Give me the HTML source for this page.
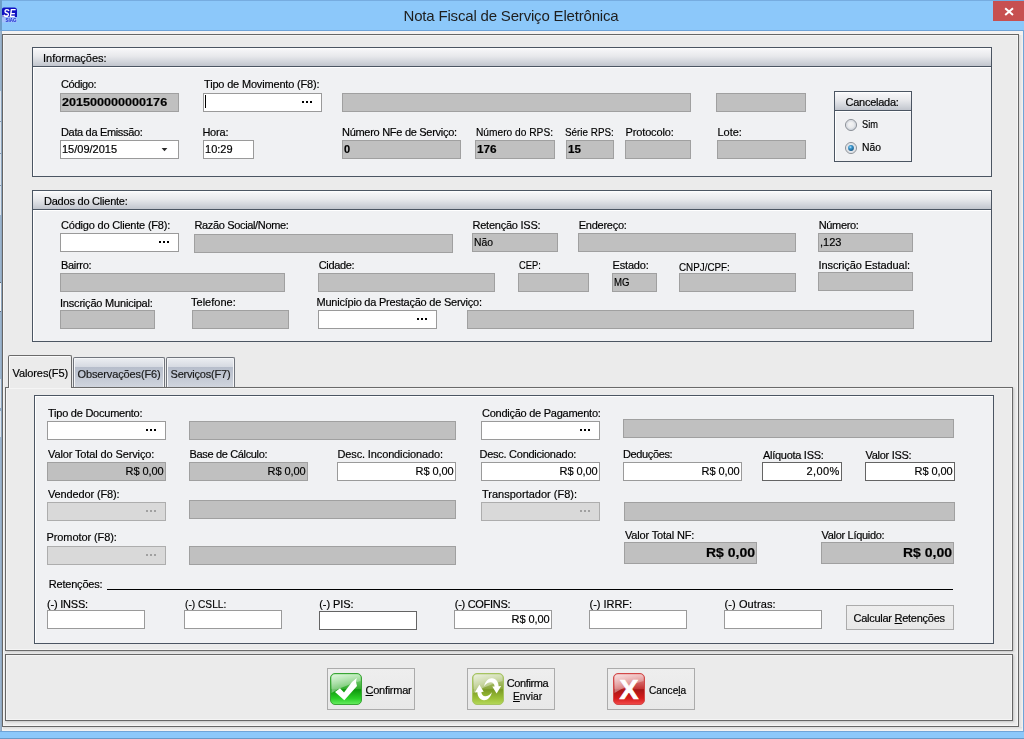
<!DOCTYPE html>
<html lang="pt-BR">
<head>
<meta charset="utf-8">
<title>Nota Fiscal de Serviço Eletrônica</title>
<style>
html,body{margin:0;padding:0}
body{width:1024px;height:739px;overflow:hidden;position:relative;background:#8cc8fa;font-family:"Liberation Sans",sans-serif;font-size:11px;line-height:13px;color:#000}
div,span,i{position:absolute;box-sizing:content-box}
u{text-decoration:underline;text-underline-offset:1px}
.t{white-space:pre;line-height:13px;-webkit-text-stroke:0.18px currentColor}
/* window chrome */
#topline{left:0;top:0;width:1024px;height:1px;background:#76ace0}
#leftT{left:0;top:0;width:2px;height:31px;background:#6d9dc9}
#leftB{left:0;top:31px;width:2px;height:700px;background:#8fa7c0}
#rightB{left:1023px;top:30px;width:1px;height:702px;background:#6fa4d8}
#tsep{left:0;top:30px;width:1024px;height:1px;background:#6fa4d8}
#client{left:2px;top:31px;width:1021px;height:700px;background:#f3f2f2}
#bsep{left:0;top:731px;width:1024px;height:1px;background:#6fa4d8}
#bline{left:0;top:738px;width:1024px;height:1px;background:#6a9ac8}
#title{will-change:transform;left:0;top:6px;width:1022px;text-align:center;font-size:15px;line-height:20px;color:#1e1e1e;letter-spacing:-0.18px;white-space:pre}
#close{left:993px;top:1px;width:31px;height:20px;background:#c75050}
/* panels */
#outer{left:2px;top:34px;width:1015px;height:691px;border:1px solid #666;background:#ebebeb;box-shadow:inset 0 0 0 1px #f5f5f5}
#rshade{left:1019px;top:35px;width:4px;height:693px;background:linear-gradient(90deg,#dcdcdc,#f4f2f2)}
#bshade{left:3px;top:727px;width:1019px;height:4px;background:linear-gradient(180deg,#dcdcdc,#f6f6f6)}
.grp{border:1px solid #4b5562;background:#f0f1f3;box-shadow:inset 1px 1px 0 #fff}
.grp .hd{left:0;top:0;right:0;height:18px;border-bottom:1px solid #4b5562;background:linear-gradient(180deg,#fff 0,#f4f4f6 12%,#e8e9ec 45%,#d3d6dc 75%,#c1c5cd 100%)}
.grp .hl{left:0;right:0;top:19px;height:1px;background:#fff}
/* fields */
.f{border:1px solid #a3a3a3}
.f.g{background:#c0c0c0;border-color:#a0a0a0}
.f.w{background:#fff;border-color:#9a9a9a}
.f.wd{background:#fff;border-color:#646464}
.f.d{background:#d9d9d9;border-color:#adadad}
.dots{right:9px;top:7px;width:2px;height:2px;background:#000;box-shadow:-4px 0 0 #000,-8px 0 0 #000}
.f.d .dots{background:#a0a0a0;box-shadow:-4px 0 0 #a0a0a0,-8px 0 0 #a0a0a0}
.btn{border:1px solid #ababab;background:linear-gradient(180deg,#eeeeee,#e8e8e8)}
</style>
</head>
<body>
<div id="client"></div>
<div id="topline"></div><div id="leftT"></div><div id="leftB"></div><div id="rightB"></div><div id="tsep"></div>
<div style="left:0;top:31px;width:1px;height:700px;background:linear-gradient(180deg,#9cb5ce 0,#9cb5ce 60px,#dde4ec 60px,#dde4ec 90px,#8194ab 90px,#8194ab 91px,#dde4ec 91px,#dde4ec 122px,#8194ab 122px,#8194ab 123px,#dde4ec 123px,#dde4ec 154px,#8194ab 154px,#8194ab 155px,#dde4ec 155px,#dde4ec 184px,#9cb5ce 184px,#9cb5ce 251px,#5f6b7a 251px,#5f6b7a 252px,#f4f4f4 252px,#f4f4f4 280px,#5f6b7a 280px,#5f6b7a 281px,#9cb5ce 281px,#9cb5ce 348px,#dde4ec 348px,#dde4ec 377px,#8fa6bf 377px,#8fa6bf 380px,#dde4ec 380px,#dde4ec 406px,#9cb5ce 406px,#9cb5ce 700px)"></div>
<div id="bsep"></div><div id="bline"></div>
<div id="title">Nota Fiscal de Serviço Eletrônica</div>
<div id="close"><svg width="31" height="20" viewBox="0 0 31 20" style="position:absolute;left:0;top:0"><path d="M12.2 7.2 L20 14 M20 7.2 L12.2 14" stroke="#fff" stroke-width="2" fill="none"/></svg></div>

<div id="outer"></div>
<div id="rshade"></div><div id="bshade"></div>

<!-- group boxes -->
<div class="grp" style="left:32px;top:47px;width:958px;height:128px"><div class="hd"></div><div class="hl"></div></div>
<div class="grp" style="left:32px;top:190px;width:958px;height:150px"><div class="hd"></div><div class="hl"></div></div>
<div class="grp" style="left:834px;top:91px;width:76px;height:69px"><div class="hd"></div><div class="hl"></div></div>

<!-- tab control -->
<div id="page" style="left:5px;top:387px;width:1006px;height:262px;border:1px solid #6a6a6a;background:#ebebeb;box-shadow:inset 0 0 0 1px #f5f5f5,1px 1px 2px rgba(0,0,0,.16)"></div>
<div id="tab1" style="left:8px;top:355px;width:62px;height:32px;border:1px solid #6a6a6a;border-bottom:none;border-radius:2px 2px 0 0;background:#ebebeb;box-shadow:inset 1px 1px 0 #fafafa"></div>
<div class="tabi" style="left:73px;top:357px;width:90px;height:29px;border:1px solid #70747c;border-bottom:none;border-radius:2px 2px 0 0;background:linear-gradient(180deg,#eceef2 0,#d6dae2 30%,#b6bdcb 31%,#c0c6d2 60%,#d0d5de 100%);box-shadow:inset 1px 1px 0 #f4f5f7,inset -1px 0 0 #f4f5f7"></div>
<div class="tabi" style="left:166px;top:357px;width:67px;height:29px;border:1px solid #70747c;border-bottom:none;border-radius:2px 2px 0 0;background:linear-gradient(180deg,#eceef2 0,#d6dae2 30%,#b6bdcb 31%,#c0c6d2 60%,#d0d5de 100%);box-shadow:inset 1px 1px 0 #f4f5f7,inset -1px 0 0 #f4f5f7"></div>
<div class="grp" style="left:34px;top:395px;width:958px;height:247px"></div>
<div style="left:107px;top:589px;width:846px;height:1px;background:#000"></div>

<!-- bottom panel -->
<div id="bot" style="left:5px;top:654px;width:1006px;height:65px;border:1px solid #666;background:#ebebeb;box-shadow:inset 0 0 0 1px #f5f5f5,1px 1px 2px rgba(0,0,0,.16)"></div>
<div class="btn" style="left:327px;top:668px;width:86px;height:40px"></div>
<div class="btn" style="left:467px;top:668px;width:86px;height:40px"></div>
<div class="btn" style="left:607px;top:668px;width:86px;height:40px"></div>
<div class="btn" style="left:846px;top:605px;width:106px;height:23px"></div>


<div class="f g" style="left:60px;top:93px;width:117px;height:17px"></div>
<div class="f w" style="left:203px;top:93px;width:117px;height:17px"><i class="dots"></i></div>
<div class="f g" style="left:342px;top:93px;width:347px;height:17px"></div>
<div class="f g" style="left:716px;top:93px;width:88px;height:17px"></div>
<div class="f w" style="left:60px;top:140px;width:117px;height:17px"></div>
<div class="f w" style="left:203px;top:140px;width:49px;height:17px"></div>
<div class="f g" style="left:342px;top:140px;width:117px;height:17px"></div>
<div class="f g" style="left:475px;top:140px;width:78px;height:17px"></div>
<div class="f g" style="left:566px;top:140px;width:46px;height:17px"></div>
<div class="f g" style="left:625px;top:140px;width:64px;height:17px"></div>
<div class="f g" style="left:717px;top:140px;width:87px;height:17px"></div>
<div class="f w" style="left:60px;top:233px;width:117px;height:17px"><i class="dots"></i></div>
<div class="f g" style="left:194px;top:234px;width:257px;height:17px"></div>
<div class="f g" style="left:472px;top:233px;width:84px;height:17px"></div>
<div class="f g" style="left:578px;top:233px;width:216px;height:17px"></div>
<div class="f g" style="left:818px;top:233px;width:93px;height:17px"></div>
<div class="f g" style="left:60px;top:273px;width:223px;height:17px"></div>
<div class="f g" style="left:318px;top:273px;width:175px;height:17px"></div>
<div class="f g" style="left:518px;top:273px;width:69px;height:17px"></div>
<div class="f g" style="left:612px;top:273px;width:43px;height:17px"></div>
<div class="f g" style="left:679px;top:273px;width:115px;height:17px"></div>
<div class="f g" style="left:818px;top:272px;width:93px;height:17px"></div>
<div class="f g" style="left:60px;top:310px;width:93px;height:17px"></div>
<div class="f g" style="left:192px;top:310px;width:95px;height:17px"></div>
<div class="f w" style="left:318px;top:310px;width:117px;height:17px"><i class="dots"></i></div>
<div class="f g" style="left:467px;top:310px;width:445px;height:17px"></div>
<div class="f w" style="left:47px;top:421px;width:117px;height:17px"><i class="dots"></i></div>
<div class="f g" style="left:189px;top:421px;width:265px;height:17px"></div>
<div class="f w" style="left:481px;top:421px;width:117px;height:17px"><i class="dots"></i></div>
<div class="f g" style="left:623px;top:419px;width:329px;height:17px"></div>
<div class="f g" style="left:47px;top:462px;width:117px;height:17px"></div>
<div class="f g" style="left:189px;top:462px;width:117px;height:17px"></div>
<div class="f w" style="left:337px;top:462px;width:117px;height:17px"></div>
<div class="f w" style="left:481px;top:462px;width:117px;height:17px"></div>
<div class="f w" style="left:623px;top:462px;width:117px;height:17px"></div>
<div class="f wd" style="left:762px;top:462px;width:78px;height:17px"></div>
<div class="f wd" style="left:865px;top:462px;width:88px;height:17px"></div>
<div class="f d" style="left:47px;top:502px;width:117px;height:17px"><i class="dots"></i></div>
<div class="f g" style="left:189px;top:500px;width:265px;height:17px"></div>
<div class="f d" style="left:481px;top:502px;width:117px;height:17px"><i class="dots"></i></div>
<div class="f g" style="left:624px;top:502px;width:329px;height:17px"></div>
<div class="f d" style="left:47px;top:546px;width:117px;height:17px"><i class="dots"></i></div>
<div class="f g" style="left:189px;top:546px;width:265px;height:17px"></div>
<div class="f g" style="left:624px;top:542px;width:131px;height:20px"></div>
<div class="f g" style="left:821px;top:542px;width:131px;height:20px"></div>
<div class="f w" style="left:47px;top:610px;width:96px;height:17px"></div>
<div class="f w" style="left:184px;top:610px;width:96px;height:17px"></div>
<div class="f wd" style="left:319px;top:611px;width:96px;height:17px"></div>
<div class="f w" style="left:454px;top:610px;width:96px;height:17px"></div>
<div class="f w" style="left:589px;top:610px;width:96px;height:17px"></div>
<div class="f w" style="left:724px;top:610px;width:96px;height:17px"></div>
<!-- radios -->
<svg style="position:absolute;left:844px;top:118px" width="14" height="14" viewBox="0 0 14 14"><defs><radialGradient id="rg1" cx="0.45" cy="0.4" r="0.6"><stop offset="0" stop-color="#f4f4f4"/><stop offset="0.7" stop-color="#e6e8ea"/><stop offset="1" stop-color="#c4cad2"/></radialGradient></defs><circle cx="7" cy="7" r="5.5" fill="url(#rg1)" stroke="#8a8f96" stroke-width="1"/><circle cx="7" cy="7" r="4.2" fill="none" stroke="#d0d6de" stroke-width="0.8"/></svg>
<svg style="position:absolute;left:844px;top:141px" width="14" height="14" viewBox="0 0 14 14"><defs><radialGradient id="rg2" cx="0.4" cy="0.35" r="0.7"><stop offset="0" stop-color="#bfe6fb"/><stop offset="0.35" stop-color="#3d9bd2"/><stop offset="1" stop-color="#14517f"/></radialGradient></defs><circle cx="7" cy="7" r="5.5" fill="#eef0f2" stroke="#8a8f96" stroke-width="1"/><circle cx="7" cy="7" r="4.2" fill="none" stroke="#d0d6de" stroke-width="0.8"/><circle cx="7" cy="7" r="2.9" fill="url(#rg2)"/></svg>
<!-- date arrow + caret -->
<svg style="position:absolute;left:161px;top:148px" width="7" height="4" viewBox="0 0 7 4"><path d="M0.600 0H6.400L3.500 3.300Z" fill="#2a2a2a"/></svg>
<div style="left:205px;top:95px;width:1px;height:13px;background:#000"></div>
<!-- button icons -->
<svg style="position:absolute;left:330px;top:673px" width="32" height="32" viewBox="0 0 32 32"><defs><linearGradient id="gA" x1="0" y1="0" x2="0" y2="1"><stop offset="0" stop-color="#9fe39a"/><stop offset="0.5" stop-color="#2fab2a"/><stop offset="0.52" stop-color="#0e960c"/><stop offset="0.8" stop-color="#2acd26"/><stop offset="1" stop-color="#68ee62"/></linearGradient><linearGradient id="gl" x1="0" y1="0" x2="1" y2="1"><stop offset="0" stop-color="#fff" stop-opacity="0.68"/><stop offset="1" stop-color="#fff" stop-opacity="0.08"/></linearGradient></defs><rect x="0.5" y="0.5" width="31" height="31" rx="4.5" fill="url(#gA)" stroke="#3aa436"/><path d="M1.5 5a3.5 3.5 0 0 1 3.5-3.5h22a3.5 3.5 0 0 1 3.5 3.5v3C23 10 9 15 1.500 20Z" fill="url(#gl)"/><path d="M5 19L10 15.2L14 19.5L22 9L26.7 5L26 9L27 13L14.3 27.3Z" fill="#fff"/></svg>
<svg style="position:absolute;left:472px;top:673px" width="32" height="32" viewBox="0 0 32 32"><defs><linearGradient id="gB" x1="0" y1="0" x2="0" y2="1"><stop offset="0" stop-color="#c3d49a"/><stop offset="0.5" stop-color="#8aa63a"/><stop offset="0.52" stop-color="#7a9a26"/><stop offset="0.8" stop-color="#9cc038"/><stop offset="1" stop-color="#b4d85a"/></linearGradient></defs><rect x="0.5" y="0.5" width="31" height="31" rx="4.5" fill="url(#gB)" stroke="#a6c460"/><path d="M1.5 5a3.5 3.5 0 0 1 3.5-3.5h22a3.5 3.5 0 0 1 3.5 3.5v3C23 10 9 15 1.500 20Z" fill="url(#gl)"/><g fill="#fff"><path id="arw" d="M12.2 13.2C13 8.500 16.500 5 20 5.200C24 5.400 26.600 9 26.600 13.200L29.200 13L24.600 20.600L20.300 13.600L22.600 13.500C22.400 11 21 9.200 18.800 9.200C16.300 9.200 14 10.800 12.200 13.200Z"/><path transform="rotate(180 16 16.200)" d="M12.2 13.2C13 8.500 16.500 5 20 5.200C24 5.400 26.600 9 26.600 13.200L29.200 13L24.600 20.600L20.300 13.600L22.600 13.500C22.400 11 21 9.200 18.800 9.200C16.300 9.200 14 10.800 12.200 13.200Z"/></g></svg>
<svg style="position:absolute;left:613px;top:673px" width="32" height="32" viewBox="0 0 32 32"><defs><linearGradient id="gC" x1="0" y1="0" x2="0" y2="1"><stop offset="0" stop-color="#e9a4a4"/><stop offset="0.5" stop-color="#c23232"/><stop offset="0.52" stop-color="#a71616"/><stop offset="0.8" stop-color="#d61c1c"/><stop offset="1" stop-color="#f24a4a"/></linearGradient></defs><rect x="0.5" y="0.5" width="31" height="31" rx="4.500" fill="url(#gC)" stroke="#d24848"/><path d="M1.5 5a3.5 3.5 0 0 1 3.5-3.5h22a3.5 3.5 0 0 1 3.5 3.5v3C23 10 9 15 1.500 20Z" fill="url(#gl)"/><text x="15.900" y="26.200" text-anchor="middle" font-family="Liberation Sans, sans-serif" font-weight="bold" font-size="28" fill="#fff" textLength="19" lengthAdjust="spacingAndGlyphs" stroke="#fff" stroke-width="0.7">X</text></svg>
<!-- app icon -->
<svg style="position:absolute;left:2px;top:7px" width="16" height="16" viewBox="0 0 16 16"><path d="M0 2.300Q0 0.400 1.800 0.400H12.300Q15 0.400 15 3.300V10.200H0Z" fill="#1010c2"/><rect x="0" y="10.200" width="15" height="5.200" fill="#a6c2fb"/><text x="1.500" y="9.500" font-family="Liberation Sans, sans-serif" font-weight="bold" font-style="italic" font-size="10" fill="#fff" textLength="12" lengthAdjust="spacingAndGlyphs">SE</text><rect x="0" y="8.500" width="6" height="1" fill="#fff"/><text x="3.500" y="14.600" font-family="Liberation Sans, sans-serif" font-weight="bold" font-size="5" fill="#1a2ad0" textLength="11" lengthAdjust="spacingAndGlyphs">SIAG</text></svg>

<div id="txt" style="left:0;top:0;width:1024px;height:739px;will-change:transform">
<span class="t" style="top:52px;left:43.00px;letter-spacing:-0.002px;">Informações:</span>
<span class="t" style="top:78px;left:61.00px;letter-spacing:-0.393px;">Código:</span>
<span class="t" style="top:78px;left:204.00px;letter-spacing:-0.175px;">Tipo de Movimento (F8):</span>
<span class="t" style="top:126px;left:61.00px;letter-spacing:-0.334px;">Data da Emissão:</span>
<span class="t" style="top:126px;left:202.40px;letter-spacing:-0.211px;">Hora:</span>
<span class="t" style="top:126px;left:342.00px;letter-spacing:-0.285px;">Número NFe de Serviço:</span>
<span class="t" style="top:126px;left:475.50px;transform:scaleX(0.9267);transform-origin:0.00px 0;">Número do RPS:</span>
<span class="t" style="top:126px;left:565.00px;transform:scaleX(0.8969);transform-origin:0.00px 0;">Série RPS:</span>
<span class="t" style="top:126px;left:625.50px;letter-spacing:-0.136px;">Protocolo:</span>
<span class="t" style="top:126px;left:717.50px;letter-spacing:-0.040px;">Lote:</span>
<span class="t" style="top:96px;left:845.50px;letter-spacing:-0.260px;">Cancelada:</span>
<span class="t" style="top:118px;left:861.90px;transform:scaleX(0.8413);transform-origin:0.00px 0;">Sim</span>
<span class="t" style="top:141px;left:861.90px;transform:scaleX(0.9421);transform-origin:0.00px 0;">Não</span>
<span class="t" style="top:96px;left:62.00px;transform:scaleX(1.1457);transform-origin:0.00px 0;font-weight:bold;">201500000000176</span>
<span class="t" style="top:143px;left:62.00px;letter-spacing:0.007px;">15/09/2015</span>
<span class="t" style="top:143px;left:205.00px;letter-spacing:0.023px;">10:29</span>
<span class="t" style="top:143px;left:344.00px;font-weight:bold;">0</span>
<span class="t" style="top:143px;left:477.00px;transform:scaleX(1.0694);transform-origin:0.00px 0;font-weight:bold;">176</span>
<span class="t" style="top:143px;left:568.00px;transform:scaleX(1.0522);transform-origin:0.00px 0;font-weight:bold;">15</span>
<span class="t" style="top:195px;left:44.00px;letter-spacing:-0.227px;">Dados do Cliente:</span>
<span class="t" style="top:219px;left:61.00px;letter-spacing:-0.201px;">Código do Cliente (F8):</span>
<span class="t" style="top:219px;left:194.50px;letter-spacing:-0.351px;">Razão Social/Nome:</span>
<span class="t" style="top:219px;left:472.50px;letter-spacing:-0.240px;">Retenção ISS:</span>
<span class="t" style="top:219px;left:578.75px;letter-spacing:-0.261px;">Endereço:</span>
<span class="t" style="top:219px;left:818.75px;letter-spacing:-0.354px;">Número:</span>
<span class="t" style="top:259px;left:61.00px;letter-spacing:-0.307px;">Bairro:</span>
<span class="t" style="top:259px;left:318.75px;letter-spacing:-0.351px;">Cidade:</span>
<span class="t" style="top:259px;left:518.75px;transform:scaleX(0.8490);transform-origin:0.00px 0;">CEP:</span>
<span class="t" style="top:259px;left:612.50px;letter-spacing:-0.166px;">Estado:</span>
<span class="t" style="top:261px;left:678.75px;transform:scaleX(0.8938);transform-origin:0.00px 0;">CNPJ/CPF:</span>
<span class="t" style="top:259px;left:818.50px;letter-spacing:-0.077px;">Inscrição Estadual:</span>
<span class="t" style="top:297px;left:60.00px;letter-spacing:-0.199px;">Inscrição Municipal:</span>
<span class="t" style="top:296px;left:191.00px;letter-spacing:0.020px;">Telefone:</span>
<span class="t" style="top:296px;left:316.50px;letter-spacing:-0.227px;">Município da Prestação de Serviço:</span>
<span class="t" style="top:236px;left:474.00px;transform:scaleX(0.9421);transform-origin:0.00px 0;">Não</span>
<span class="t" style="top:236px;left:820.00px;letter-spacing:-0.014px;">,123</span>
<span class="t" style="top:276px;left:614.00px;transform:scaleX(0.8740);transform-origin:0.00px 0;">MG</span>
<span class="t" style="top:367px;left:12.50px;letter-spacing:-0.098px;">Valores(F5)</span>
<span class="t" style="top:368px;left:77.50px;letter-spacing:-0.129px;color:#1a1a1a;">Observações(F6)</span>
<span class="t" style="top:368px;left:170.50px;letter-spacing:-0.198px;color:#1a1a1a;">Serviços(F7)</span>
<span class="t" style="top:407px;left:48.00px;letter-spacing:-0.241px;">Tipo de Documento:</span>
<span class="t" style="top:407px;left:482.00px;letter-spacing:-0.254px;">Condição de Pagamento:</span>
<span class="t" style="top:448px;left:48.00px;letter-spacing:-0.122px;">Valor Total do Serviço:</span>
<span class="t" style="top:448px;left:189.50px;letter-spacing:-0.340px;">Base de Cálculo:</span>
<span class="t" style="top:448px;left:337.50px;letter-spacing:-0.134px;">Desc. Incondicionado:</span>
<span class="t" style="top:448px;left:479.50px;letter-spacing:-0.261px;">Desc. Condicionado:</span>
<span class="t" style="top:448px;left:623.00px;letter-spacing:-0.379px;">Deduções:</span>
<span class="t" style="top:449px;left:763.00px;letter-spacing:-0.283px;">Alíquota ISS:</span>
<span class="t" style="top:449px;left:865.50px;letter-spacing:-0.294px;">Valor ISS:</span>
<span class="t" style="top:488px;left:48.00px;letter-spacing:-0.140px;">Vendedor (F8):</span>
<span class="t" style="top:488px;left:482.00px;letter-spacing:0.006px;">Transportador (F8):</span>
<span class="t" style="top:531px;left:46.50px;letter-spacing:-0.093px;">Promotor (F8):</span>
<span class="t" style="top:529px;left:625.00px;letter-spacing:-0.170px;">Valor Total NF:</span>
<span class="t" style="top:529px;left:821.50px;letter-spacing:-0.308px;">Valor Líquido:</span>
<span class="t" style="top:578px;left:48.75px;letter-spacing:-0.204px;">Retenções:</span>
<span class="t" style="top:598px;left:47.00px;letter-spacing:-0.215px;">(-) INSS:</span>
<span class="t" style="top:598px;left:184.50px;transform:scaleX(0.9257);transform-origin:0.00px 0;">(-) CSLL:</span>
<span class="t" style="top:598px;left:319.25px;letter-spacing:-0.075px;">(-) PIS:</span>
<span class="t" style="top:598px;left:454.75px;letter-spacing:-0.285px;">(-) COFINS:</span>
<span class="t" style="top:598px;left:589.50px;letter-spacing:-0.026px;">(-) IRRF:</span>
<span class="t" style="top:598px;left:724.50px;letter-spacing:0.094px;">(-) Outras:</span>
<span class="t" style="top:465px;left:125.50px;letter-spacing:-0.068px;">R$ 0,00</span>
<span class="t" style="top:465px;left:267.50px;letter-spacing:-0.068px;">R$ 0,00</span>
<span class="t" style="top:465px;left:415.50px;letter-spacing:-0.068px;">R$ 0,00</span>
<span class="t" style="top:465px;left:559.50px;letter-spacing:-0.068px;">R$ 0,00</span>
<span class="t" style="top:465px;left:701.50px;letter-spacing:-0.068px;">R$ 0,00</span>
<span class="t" style="top:465px;left:806.50px;letter-spacing:0.398px;">2,00%</span>
<span class="t" style="top:465px;left:914.50px;letter-spacing:-0.068px;">R$ 0,00</span>
<span class="t" style="top:545px;left:705.75px;transform:scaleX(1.0761);transform-origin:0 0;font-weight:bold;font-size:13px;line-height:16px;">R$ 0,00</span>
<span class="t" style="top:545px;left:902.75px;transform:scaleX(1.0761);transform-origin:0 0;font-weight:bold;font-size:13px;line-height:16px;">R$ 0,00</span>
<span class="t" style="top:613px;left:511.50px;letter-spacing:-0.068px;">R$ 0,00</span>
<span class="t" style="top:612px;left:853.50px;letter-spacing:-0.264px;">Calcular <u>R</u>etenções</span>
<span class="t" style="top:684px;left:365.50px;letter-spacing:-0.265px;"><u>C</u>onfirmar</span>
<span class="t" style="top:677px;left:506.75px;letter-spacing:-0.394px;">Confirma</span>
<span class="t" style="top:690px;left:512.50px;transform:scaleX(0.9360);transform-origin:0.00px 0;"><u>E</u>nviar</span>
<span class="t" style="top:684px;left:648.50px;transform:scaleX(0.9214);transform-origin:0.00px 0;">Cance<u>l</u>a</span>
</div>
</body>
</html>
